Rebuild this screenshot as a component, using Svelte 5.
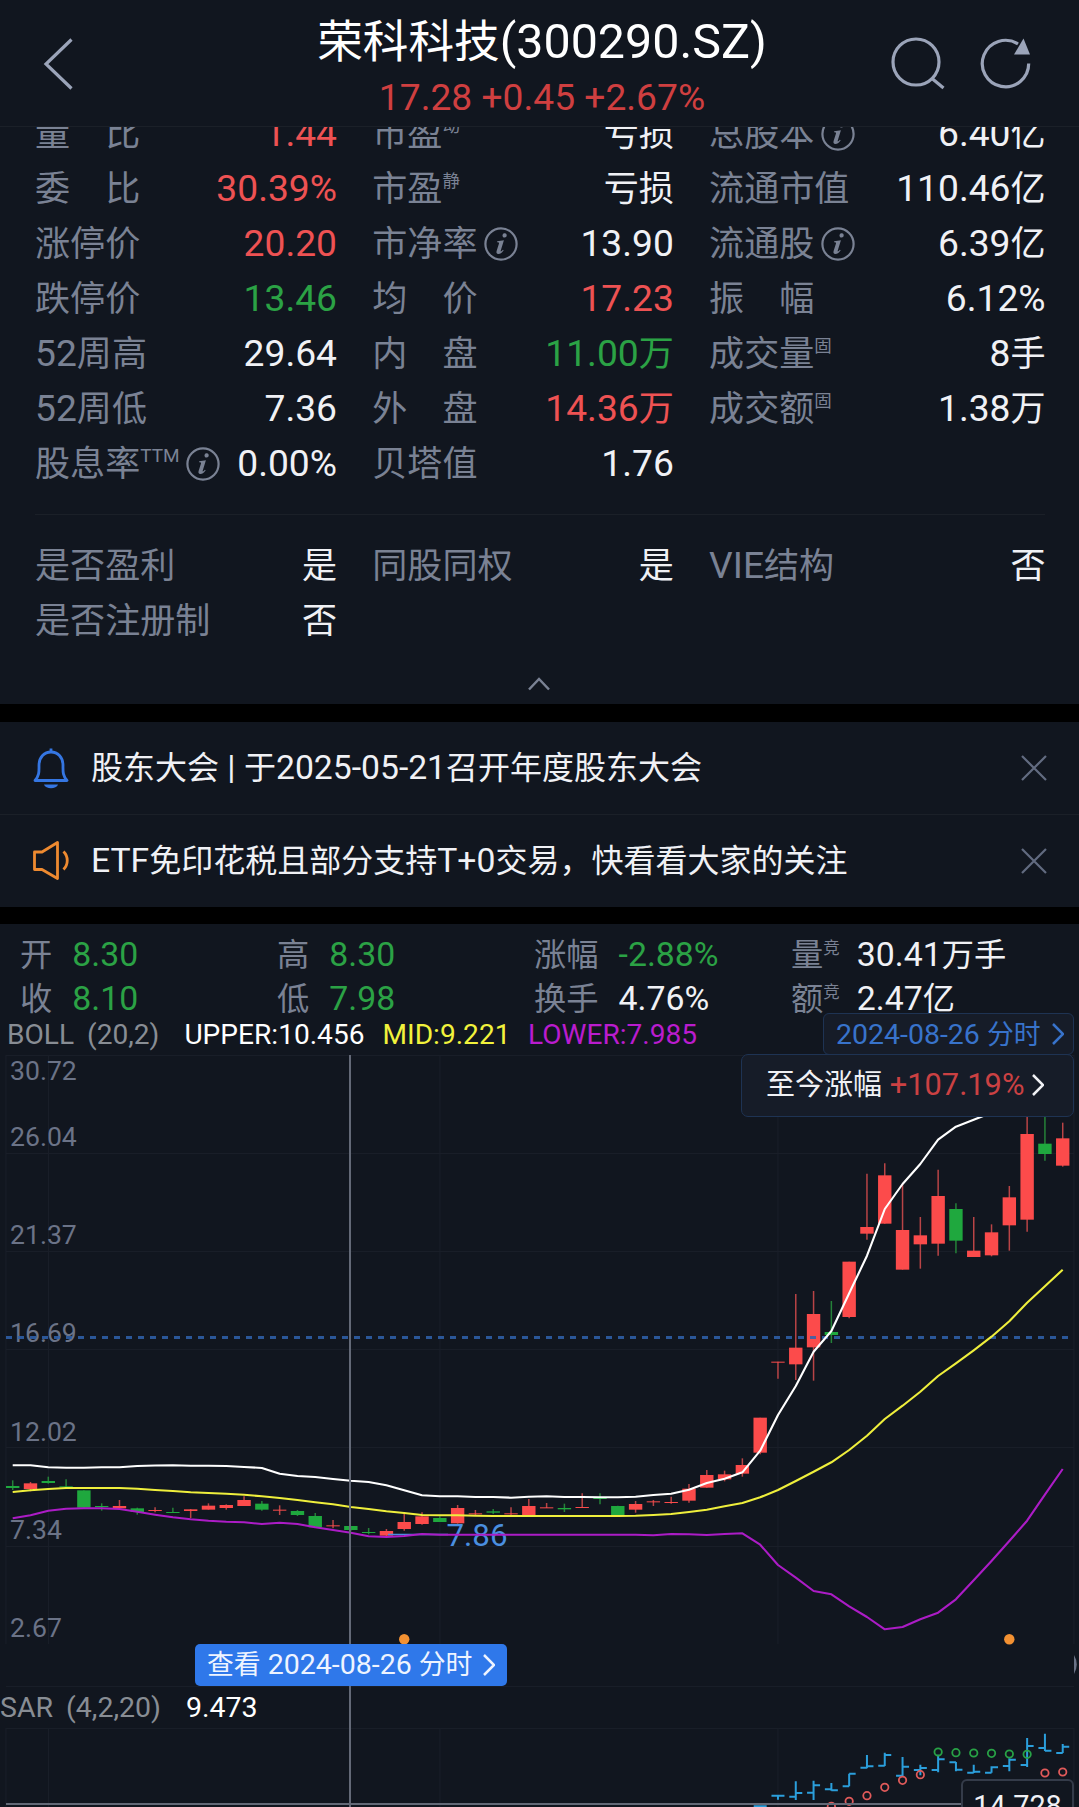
<script lang="ts">
  type Cell = { label: string; sup?: string; info?: boolean; value: string; tone?: string };

  const stats: Cell[] = [
    { label: '量　比', value: '1.44', tone: 'up' },
    { label: '市盈', sup: '动', value: '亏损' },
    { label: '总股本', info: true, value: '6.40亿' },
    { label: '委　比', value: '30.39%', tone: 'up' },
    { label: '市盈', sup: '静', value: '亏损' },
    { label: '流通市值', value: '110.46亿' },
    { label: '涨停价', value: '20.20', tone: 'up' },
    { label: '市净率', info: true, value: '13.90' },
    { label: '流通股', info: true, value: '6.39亿' },
    { label: '跌停价', value: '13.46', tone: 'down' },
    { label: '均　价', value: '17.23', tone: 'up' },
    { label: '振　幅', value: '6.12%' },
    { label: '52周高', value: '29.64' },
    { label: '内　盘', value: '11.00万', tone: 'down' },
    { label: '成交量', sup: '固', value: '8手' },
    { label: '52周低', value: '7.36' },
    { label: '外　盘', value: '14.36万', tone: 'up' },
    { label: '成交额', sup: '固', value: '1.38万' },
    { label: '股息率', sup: 'TTM', info: true, value: '0.00%' },
    { label: '贝塔值', value: '1.76' }
  ];
  const flags: Cell[] = [
    { label: '是否盈利', value: '是' },
    { label: '同股同权', value: '是' },
    { label: 'VIE结构', value: '否' },
    { label: '是否注册制', value: '否' }
  ];
  const quotes: Cell[] = [
    { label: '开', value: '8.30', tone: 'down' },
    { label: '高', value: '8.30', tone: 'down' },
    { label: '涨幅', value: '-2.88%', tone: 'down' },
    { label: '量', sup: '竞', value: '30.41万手' },
    { label: '收', value: '8.10', tone: 'down' },
    { label: '低', value: '7.98', tone: 'down' },
    { label: '换手', value: '4.76%' },
    { label: '额', sup: '竞', value: '2.47亿' }
  ];

  const px = (i: number) => 12.7 + 17.797 * i;
  const third = (base: number, ys: number[]) => ys.map((y) => base + y / 3);

  // candle tuples: rising flag, high, body top, body bottom, low (in thirds of a pixel from each base)
  const groups: [number, number[][]][] = [
    [1440, [
      [0,121,138,144,150],[1,126,130,147,154],[0,110,123,129,131],[0,118,139,142,142],[0,151,151,203,203],
      [0,190,198,201,212],[1,180,198,205,205],[0,203,205,216,224],[1,202,210,213,217],[0,203,216,218,218],
      [1,207,208,213,234],[1,190,197,209,209],[1,193,195,204,209],[1,169,180,198,198],[0,183,191,209,212],
      [1,196,209,212,225],[0,210,213,225,228],[0,219,228,262,262],[1,240,256,258,265],[0,258,258,270,272],
      [0,264,276,279,283],[1,267,273,287,291]
    ]],
    [1380, [
      [1,400,426,447,452],[1,397,409,432,434],[0,409,414,426,426],[1,375,384,430,431],[1,390,400,402,407],
      [0,387,394,398,402],[1,382,400,402,405],[1,357,378,405,411],[1,369,382,384,384],[0,371,384,388,396],
      [1,340,381,383,383],[0,340,354,356,373],[0,377,378,405,405],[1,363,372,389,398],[1,360,364,366,378],
      [1,350,366,368,371],[1,312,326,362,368],[1,270,285,323,323],[1,272,283,298,304],[1,235,255,281,290],
      [1,113,113,218,223]
    ]],
    [1110, [
      [1,755,755,758,806],[1,552,713,763,810],[1,543,612,712,812],[0,573,666,675,699],[1,455,455,621,625],
      [1,191,351,371,389],[1,160,196,341,341],[1,222,360,479,479],[1,321,376,403,476],[1,179,258,401,437],
      [0,280,297,392,430],[1,321,422,441,441],[1,343,367,436,439],[1,228,262,346,422],[1,0,72,329,365],
      [0,0,101,132,152],[1,38,85,167,170]
    ]]
  ];
  const candles = groups
    .flatMap(([base, rows]) => rows.map(([up, ...ys]) => ({ up: up === 1, y: third(base, ys) })))
    .map((c, i) => ({ ...c, x: px(i) }));

  const upper = [
    ...third(1440, [76,76,82,83,83,82,82,78,76.5,76,77,77,78,81,84,101,108,111,117,122,126,136]),
    ...third(1380, [331,346,349,349,351,351,353,350,349,351,351,352,352,350,345,341,329,309,296,277,212,105]),
    ...third(1110, [828,725,663,550,437,297,222,162,89,50,29,8])
  ];
  const middle = [
    ...third(1440, [156,151,147,144,144,144,144,146,150,153,157,159,161,164,169,174,180,187,193,201,207,214]),
    ...third(1380, [399,405,406,406,407,408,408,408,408,408,408,408,408,407,405,402,396,389,379,369,352,330,303]),
    ...third(1380, [275,247,210,167,117]),
    ...third(1110, [887,845,798,760,721,680,634,578,529,479])
  ];
  const lower = [
    ...third(1440, [235,226,212,206,205,205,207,215,224,232,238,242,245,247,252,248,252,262,270,278,289,291]),
    ...third(1380, [468,462,464,464,464,464,464,464,464,464,464,464,464,464,466,462,463,465,462,460,494,555,593]),
    ...third(1380, [633,643,679,711,748,741,718,698,658,601,543,483,422,344,267])
  ];
  const line = (ys: number[]) => ys.map((y, i) => `${px(i).toFixed(1)},${y.toFixed(1)}`).join(' ');

  const gridX = [6, 48.5, 440, 778, 1074];
  const gridY = [1055.5, 1153.5, 1251.5, 1349.5, 1447.5, 1546.5, 1686.5];
  const axis: [string, number][] = [
    ['30.72', 1080], ['26.04', 1146], ['21.37', 1244], ['16.69', 1342], ['12.02', 1441], ['7.34', 1539], ['2.67', 1637]
  ];

  // high, low, open, close
  const bars = [
    [559,562,559,559],[527,539,527,527],[484,540,530,519],[482,540,518,496],[489,512,508,511],[461,499,499,461],[405,445,443,439],
    [398,438,437,405],[411,468,467,440],[434,466,450,444],[404,457,450,418],[426,454,427,449],[434,459,458,455],
    [439,458,458,442],[415,454,438,419],[354,441,435,378],[341,393,384,392],[372,399,399,380]
  ].map((ys, i) => ({ x: px(42 + i), y: third(1620, ys) }));
  const sar = [
    [46,559,0],[47,544,0],[48,527,0],[49,502,0],[50,481,0],[51,464,0],[52,396,1],[53,398,1],[54,399,1],
    [55,400,1],[56,402,1],[57,403,1],[58,459,0],[59,456,0]
  ].map(([i, y, g]) => ({ x: px(i), y: 1620 + y / 3, green: g === 1 }));

  const split = (s: string) => s.split(/([\u3000-\u9fff\uff00-\uffef]+)/).filter(Boolean);
  const isHan = (s: string) => /[\u3000-\u9fff\uff00-\uffef]/.test(s);
</script>

{#snippet mixed(text: string)}{#each split(text) as run}{#if isHan(run)}<span class="han">{run}</span>{:else}{run}{/if}{/each}{/snippet}

{#snippet cell(c: Cell)}
  <div class="cell">
    <span class="label">{@render mixed(c.label)}{#if c.sup}<span class="sup" class:latin={c.sup === 'TTM'}>{c.sup}</span>{/if}</span>
    {#if c.info}
      <svg class="info" viewBox="0 0 34 34">
        <circle cx="17" cy="17" r="15.6" />
        <path d="M18.700 7.600a2.100 2.100 0 1 1 2 2.900 2 2 0 0 1-2-2.900Z" />
        <path d="M13.200 14.200l6.700-1-3.200 10.600c-.3 1.200.9.600 2.200-1.100l.8.600c-2 3-3.800 3.900-5.400 3.800-1.700-.1-2.200-1.300-1.700-3l2.400-7.700c.2-.9-.4-1.100-1.900-1.200Z" />
      </svg>
    {/if}
    <span class="value {c.tone ?? ''}">{@render mixed(c.value)}</span>
  </div>
{/snippet}

<div class="screen">
  <header>
    <svg class="back" viewBox="0 0 32 54"><path d="M29.500 2.500 4 27l25.500 24.500" /></svg>
    <div class="heading">
      <h1>{@render mixed('荣科科技(300290.SZ)')}</h1>
      <p>17.28 +0.45 +2.67%</p>
    </div>
    <div class="tools">
      <svg width="56" height="56" viewBox="0 0 56 56"><circle cx="26" cy="26" r="23" /><path d="M42 42.500 53.500 52" /></svg>
      <svg width="52" height="56" viewBox="0 0 52 56">
        <path d="M48.700 27.500A23.200 23.200 0 1 1 38 8" />
        <path class="solid" d="M43.500 2.500 50 18.500H34Z" />
      </svg>
    </div>
  </header>

  <section class="stats">
    <div class="grid top">
      {#each stats as s}{@render cell(s)}{/each}
    </div>
    <div class="grid bottom">
      {#each flags as s}{@render cell(s)}{/each}
    </div>
    <svg class="collapse" viewBox="0 0 24 16"><path d="M2 13.500 12 3l10 10.500" /></svg>
  </section>

  <section class="notices">
    <div class="notice">
      <svg class="bell" viewBox="0 0 38 42">
        <path d="M3 33.500c4.500-5 4-9.500 4-15C7 10 12.500 5 19 5s12 5 12 13.500c0 5.500-.5 10 4 15Z" />
        <path d="M19 1.500V5" />
        <path class="fill" d="M12 37.500h14c-1.500 5-12.500 5-14 0Z" />
      </svg>
      <span>{@render mixed('股东大会 | 于2025-05-21召开年度股东大会')}</span>
      <svg class="close" viewBox="0 0 26 26"><path d="M1 1l24 24M25 1 1 25" /></svg>
    </div>
    <div class="notice">
      <svg class="horn" viewBox="0 0 38 42">
        <path d="M2.500 12H10L25.500 2.500V38.500L10 29.500H2.500Z" />
        <path d="M31.500 11.500c5 5 5 13 0 18" />
      </svg>
      <span>{@render mixed('ETF免印花税且部分支持T+0交易，快看看大家的关注')}</span>
      <svg class="close" viewBox="0 0 26 26"><path d="M1 1l24 24M25 1 1 25" /></svg>
    </div>
  </section>

  <section class="chart">
    <div class="quotes">
      {#each quotes as q}
        <div class="quote" class:has-sup={q.sup}>
          <span class="label">{@render mixed(q.label)}{#if q.sup}<span class="sup">{q.sup}</span>{/if}</span>
          <span class={q.tone ?? ''}>{@render mixed(q.value)}</span>
        </div>
      {/each}
    </div>
    <div class="boll">
      <span class="name">BOLL</span><span class="params">(20,2)</span>
      <span class="u">UPPER:10.456</span><span class="m">MID:9.221</span><span class="l">LOWER:7.985</span>
      <div class="chip">
        <span>{@render mixed('2024-08-26 分时')}</span>
        <svg viewBox="0 0 12 22"><path d="M1 1l10 10L1 21" /></svg>
      </div>
    </div>

    <svg class="main" viewBox="0 1055 1079 632">
      <g class="gridlines">
        {#each gridX as x}<path d="M{x} 1055V1644" />{/each}
        {#each gridY as y}<path d="M6 {y}H1074" />{/each}
      </g>
      {#each axis as [t, y]}<text class="axis" x="10" {y}>{t}</text>{/each}
      {#each candles as c}
        <g class={c.up ? 'rise' : 'fall'}>
          <path class="wick" d="M{c.x} {c.y[0]}V{c.y[3]}" />
          <rect x={c.x - 6.7} y={c.y[1]} width="13.4" height={Math.max(c.y[2] - c.y[1], 1)} />
        </g>
      {/each}
      <path class="last" d="M6 1337.500H1069" />
      <path class="leader" d="M388 1534.500H448" />
      <polyline class="upper" points={line(upper)} />
      <polyline class="middle" points={line(middle)} />
      <text class="low" x="446.500" y="1545.500">7.86</text>
      <polyline class="lower" points={line(lower)} />
      <circle class="event" cx="404.2" cy="1639.3" r="5.2" />
      <circle class="event" cx="1009.3" cy="1639.3" r="5.2" />
      <path class="knob" d="M1074 1655q5.500 9.500 0 19Z" />
    </svg>

    <div class="sar-head"><span class="name">SAR</span><span class="params">(4,2,20)</span><span class="u">9.473</span></div>

    <svg class="sub" viewBox="0 1728 1079 79">
      <g class="gridlines">
        <path d="M6 1728.500H1074" />
        {#each gridX as x}<path d="M{x} 1728V1807" />{/each}
      </g>
      {#each bars as b}
        <path class="ohlc" d="M{b.x} {b.y[0]}V{b.y[1]}M{b.x - 6.5} {b.y[2]}H{b.x}M{b.x} {b.y[3]}H{b.x + 6.5}" />
      {/each}
      {#each sar as s}<circle class={s.green ? 'sar green' : 'sar'} cx={s.x} cy={s.y} r="3.7" />{/each}
      <path class="cross" d="M6 1804H1074" />
    </svg>

    <div class="crosshair"></div>
    <div class="since">
      <span>{@render mixed('至今涨幅 ')}<b>+107.19%</b></span>
      <svg viewBox="0 0 12 22"><path d="M1 1l10 10L1 21" /></svg>
    </div>
    <div class="view">
      <span>{@render mixed('查看 2024-08-26 分时')}</span>
      <svg viewBox="0 0 12 22"><path d="M1 1l10 10L1 21" /></svg>
    </div>
    <div class="reading">14.728</div>
  </section>
</div>

<style>
  :global(body) { background: #000; }
  .screen {
    width: 1079px;
    height: 1807px;
    overflow: hidden;
    background: #000;
    color: #f0f1f5;
    font-family: Roboto, 'Noto Sans CJK SC', sans-serif;
    font-size: 37.2px;
    display: flex;
    flex-direction: column;
  }
  svg { display: block; flex: none; fill: none; }
  .han { font-size: 0.943em; }
  .up { color: #ee5253; }
  .down { color: #2ba245; }

  header {
    height: 126px;
    flex: none;
    display: flex;
    background: #11161f;
    border-bottom: 1px solid #1b2028;
    position: relative;
    z-index: 1;
  }
  .back { width: 32px; height: 54px; margin: 37px 0 0 42px; }
  .back path, .tools path, .tools circle { stroke: #9ba4b9; stroke-width: 3.2; }
  .heading { flex: 1; text-align: center; margin-left: 120px; }
  h1, p { margin: 0; font-weight: 400; white-space: nowrap; }
  h1 { font-size: 48.4px; line-height: 56px; margin-top: 14px; color: #fff; }
  p { line-height: 40px; margin-top: 6px; color: #cf3f40; }
  .tools { display: flex; gap: 34px; margin: 36px 47px 0 0; }
  .tools .solid { fill: #9ba4b9; stroke: none; }

  .stats { height: 577px; flex: none; background: #11161f; overflow: hidden; }
  .grid { display: grid; grid-template-columns: 302px 301.5px 336.5px; column-gap: 35.3px; grid-auto-rows: 55px; margin: 0 34px 0 35px; }
  .grid.top { margin-top: -21px; height: 408px; border-bottom: 1px solid #1b2028; }
  .grid.bottom { padding-top: 23px; }
  .cell { display: flex; align-items: center; line-height: 55px; white-space: nowrap; }
  .label { color: #7a8294; }
  .value { margin-left: auto; }
  .sup { font-size: 17.5px; line-height: 1; position: relative; top: -14px; }
  .sup.latin { font-size: 19px; }
  .info { width: 34px; height: 34px; margin-left: 6.5px; }
  .info circle { stroke: #7a8294; stroke-width: 2.2; }
  .info path { fill: #7a8294; }
  .collapse { width: 24px; height: 16px; margin: 28px 0 0 526.5px; }
  .collapse path { stroke: #7a8294; stroke-width: 2.5; }

  .notices { margin-top: 18px; height: 185px; flex: none; background: #11161f; }
  .notice { height: 92px; display: flex; align-items: center; padding: 0 32px; font-size: 33.7px; white-space: nowrap; }
  .notice + .notice { border-top: 1px solid #1b2028; }
  .notice > span { margin-left: 21px; line-height: 92px; }
  .notice .han { font-size: 0.95em; }
  .bell, .horn { width: 38px; height: 42px; }
  .bell path { stroke: #3576e2; stroke-width: 2.8; stroke-linejoin: round; }
  .bell .fill { fill: #3576e2; stroke: none; }
  .horn path { stroke: #ee8a30; stroke-width: 2.8; stroke-linejoin: round; }
  .close { width: 26px; height: 26px; margin-left: auto; }
  .close path { stroke: #626b80; stroke-width: 2.2; }

  .chart { position: relative; margin-top: 17px; flex: 1; background: #11161f; }
  .quotes { height: 89px; padding: 9px 0 0 20px; box-sizing: border-box; display: grid; grid-template-columns: repeat(4, 257px); grid-auto-rows: 44px; font-size: 33.8px; line-height: 44px; white-space: nowrap; }
  .quote { display: flex; gap: 20px; }
  .quote.has-sup { gap: 17px; }
  .quote .han { font-size: 0.955em; }
  .quote .sup { font-size: 16.5px; top: -12px; }
  .boll, .sar-head { font-size: 28.1px; display: flex; white-space: nowrap; }
  .boll { height: 42px; line-height: 44px; padding-left: 7px; box-sizing: border-box; }
  .name, .params { color: #888d94; }
  .params { margin-left: 13px; }
  .u { color: #fff; margin-left: 25px; }
  .m { color: #f1f23c; margin-left: 18px; }
  .l { color: #ba1cce; margin-left: 17.5px; }
  .chip, .since, .view { display: flex; align-items: center; box-sizing: border-box; white-space: pre; }
  .chip { margin: 0 5px 0 auto; width: 251px; height: 42px; padding-left: 12px; border: 1px solid #1e3353; border-radius: 6px; background: #161c28; color: #3873cb; font-size: 28.5px; }
  .chip span { padding-top: 1px; }
  .chip span span { padding: 0; }
  .chip svg, .since svg, .view svg { width: 12px; height: 22px; margin-left: 11px; stroke: currentColor; stroke-width: 2.5; }

  .main { width: 1079px; height: 632px; }
  .gridlines path { stroke: #191e28; stroke-width: 1.2; }
  .axis { fill: #6b7387; font-size: 26.6px; }
  .rise rect { fill: #fc4b4b; }
  .rise .wick { stroke: #b94446; }
  .fall rect { fill: #1fa83e; }
  .fall .wick { stroke: #258239; }
  .wick { stroke-width: 1.5; }
  .last { stroke: #3063ae; stroke-width: 3; stroke-dasharray: 6 6; opacity: 0.85; }
  .leader { stroke: #4a8fe0; stroke-width: 1.5; }
  polyline { stroke-width: 2.1; stroke-linejoin: round; }
  .upper { stroke: #fff; }
  .middle { stroke: #efef3c; }
  .lower { stroke: #ac1cc6; }
  .low { fill: #4a8fe0; font-size: 31.3px; }
  .event { fill: #f39132; }
  .knob { fill: #6b7387; }
  .sar-head { height: 41px; line-height: 42px; font-size: 28.5px; }
  .sub { width: 1079px; height: 79px; }
  .ohlc { stroke: #2b9fdc; stroke-width: 2; }
  .sar { stroke: #e05a5a; stroke-width: 1.8; }
  .sar.green { stroke: #28a246; }
  .cross { stroke: #636977; stroke-width: 2; }

  .crosshair { position: absolute; left: 349px; top: 131px; width: 2px; bottom: 0; background: #636977; }
  .since { position: absolute; left: 741px; top: 130px; width: 333px; height: 63px; padding: 0 0 1px 24px; border: 1.5px solid #1e3353; border-radius: 7px; background: #161c28; font-size: 30.8px; line-height: 40px; }
  .since b { font-weight: 400; color: #cb4143; }
  .since svg { margin: 0 0 0 8px; }
  .view { position: absolute; left: 195px; top: 720px; width: 312px; height: 42px; padding-left: 12px; border-radius: 5px; background: #2f78ea; color: #eef4ff; font-size: 28.5px; line-height: 40px; }
  .reading { position: absolute; left: 961px; top: 855px; width: 113px; height: 60px; box-sizing: border-box; border: 2px solid #343b49; border-radius: 6px; background: #11161f; font-size: 28.8px; line-height: 46px; padding-top: 2px; text-align: center; }
</style>
